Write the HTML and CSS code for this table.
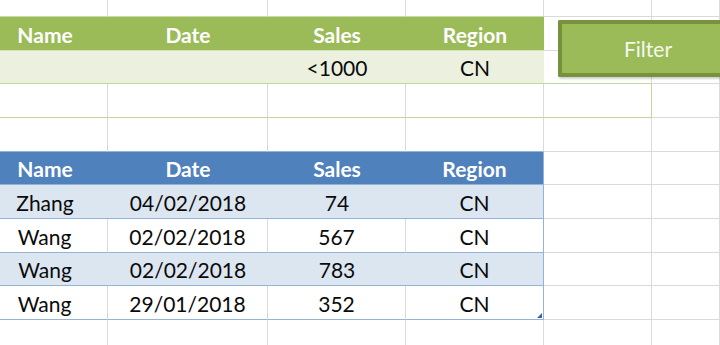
FILE: index.html
```html
<!DOCTYPE html>
<html>
<head>
<meta charset="utf-8">
<link rel="stylesheet" href="styles.css">
</head>
<body>
<div class="page">
<div class="sheet">
  <!-- row 0 -->
  <div class="c r0 gtop"></div><div class="c r0 gtop"></div><div class="c r0 gtop"></div><div class="c r0 gtop"></div><div class="c r0"></div><div class="c r0"></div>
  <!-- green criteria header -->
  <div class="c gh">Name</div><div class="c gh">Date</div><div class="c gh">Sales</div><div class="c gh">Region</div><div class="c"></div><div class="c"></div>
  <!-- criteria row -->
  <div class="c gd"></div><div class="c gd"></div><div class="c gd">&lt;1000</div><div class="c gd">CN</div><div class="c gbot"></div><div class="c"></div>
  <!-- empty green box row -->
  <div class="c gbot"></div><div class="c gbot"></div><div class="c gbot"></div><div class="c gbot"></div><div class="c gbot gright"></div><div class="c"></div>
  <!-- empty row -->
  <div class="c btop"></div><div class="c btop"></div><div class="c btop"></div><div class="c btop"></div><div class="c"></div><div class="c"></div>
  <!-- blue header -->
  <div class="c bh">Name</div><div class="c bh">Date</div><div class="c bh">Sales</div><div class="c bh bend">Region</div><div class="c"></div><div class="c"></div>
  <!-- data -->
  <div class="c bd band">Zhang</div><div class="c bd band">04/02/2018</div><div class="c bd band">74</div><div class="c bd band bend">CN</div><div class="c"></div><div class="c"></div>
  <div class="c bd">Wang</div><div class="c bd">02/02/2018</div><div class="c bd">567</div><div class="c bd bend">CN</div><div class="c"></div><div class="c"></div>
  <div class="c bd band">Wang</div><div class="c bd band">02/02/2018</div><div class="c bd band">783</div><div class="c bd band bend">CN</div><div class="c"></div><div class="c"></div>
  <div class="c bd">Wang</div><div class="c bd">29/01/2018</div><div class="c bd">352</div><div class="c bd bend last">CN</div><div class="c"></div><div class="c"></div>
  <!-- trailing row -->
  <div class="c"></div><div class="c"></div><div class="c"></div><div class="c"></div><div class="c"></div><div class="c"></div>
  <button class="filter">Filter</button>
</div>
</div>
</body>
</html>
```

FILE: styles.css
```css
html, body {
  margin: 0;
  padding: 0;
  background: #ffffff;
}
.page {
  width: 720px;
  height: 345px;
  overflow: hidden;
}
.sheet {
  position: relative;
  margin-left: -18px;
  display: grid;
  grid-template-columns: 126px 160px 138px 138px 108px 68px;
  grid-template-rows: 17px repeat(9, 33.67px) 40px;
  font-family: Lato, "Open Sans", sans-serif;
  font-size: 21px;
  color: #0a0a0a;
}
.c {
  box-sizing: border-box;
  border-right: 1px solid #dadada;
  border-bottom: 1px solid #dadada;
  display: flex;
  align-items: center;
  justify-content: center;
  padding-top: 2px;
  white-space: nowrap;
}
.r0 {
  padding: 0;
}
.gtop {
  border-bottom-color: #c9dba5;
}
.gh {
  background: #9bbb59;
  color: #ffffff;
  font-weight: bold;
  border-right: none;
  border-bottom-color: #d5e3bb;
}
.gd {
  background: #ebf1de;
  border-right: none;
  border-bottom-color: #c4d79b;
}
.gbot {
  border-bottom-color: #c4d79b;
}
.gright {
  border-right-color: #c4d79b;
}
.btop {
  border-bottom-color: #95b3d7;
}
.bh {
  background: #4f81bd;
  color: #ffffff;
  font-weight: bold;
  border-right: none;
  border-bottom-color: #95b3d7;
}
.bd {
  border-bottom-color: #95b3d7;
}
.band {
  background: #dce6f1;
  border-right: none;
}
.bend {
  border-right: 1px solid #95b3d7;
}
.last {
  position: relative;
}
.last::after {
  content: "";
  position: absolute;
  right: 1px;
  bottom: 1px;
  width: 0;
  height: 0;
  border-left: 5px solid transparent;
  border-bottom: 5px solid #3a5fb0;
}
.filter {
  position: absolute;
  left: 576px;
  top: 20px;
  width: 162px;
  height: 57px;
  box-sizing: border-box;
  background: #9bbb59;
  border: 4px solid #76923c;
  border-right: none;
  border-radius: 2px 0 0 2px;
  box-shadow: 1px 2px 2px rgba(0, 0, 0, 0.18);
  color: #f6f8f0;
  font-family: Lato, "Open Sans", sans-serif;
  font-size: 21px;
  padding: 0 0 0 62px;
  text-align: left;
}
```
